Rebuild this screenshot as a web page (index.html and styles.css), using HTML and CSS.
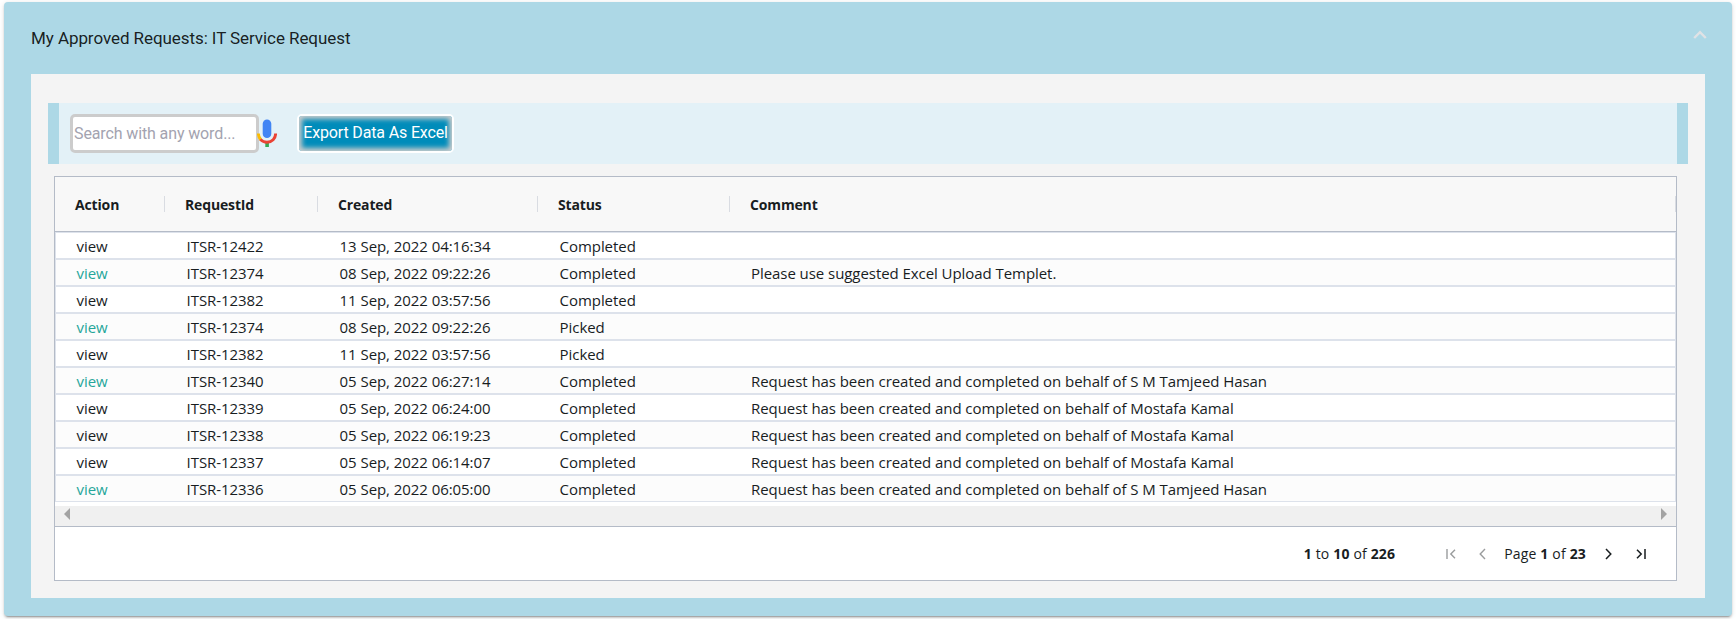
FILE: index.html
```html
<!DOCTYPE html>
<html lang="en">
<head>
<meta charset="utf-8">
<title>My Approved Requests</title>
<link rel="stylesheet" href="styles.css">
</head>
<body>
<section class="card">
  <header class="card-header">
    <h1 class="card-title">My Approved Requests: IT Service Request</h1>
    <svg class="collapse" width="14" height="10" viewBox="0 0 14 10"><path d="M1.2 8 7 2.2 12.8 8" fill="none" stroke="#e0e2e5" stroke-width="2.4"/></svg>
  </header>
  <div class="panel">
    <div class="toolbar">
      <input class="search" type="text" placeholder="Search with any word...">
      <svg class="mic" width="20" height="28" viewBox="0 0 20 28">
        <rect x="5.7" y=".4" width="8.6" height="18.6" rx="4.3" fill="#4285f4"/>
        <path d="M8.3 23h3.6v5H8.3z" fill="#34a853"/>
        <path d="M1.4 14.6C1.4 17 2.4 19.4 4 21" fill="none" stroke="#fbbc04" stroke-width="2.9"/>
        <path d="M3.4 20.4C5.2 22.4 7.4 23.3 10 23.3c5 0 8.6-3.7 8.6-8.7" fill="none" stroke="#ea4335" stroke-width="2.9"/>
      </svg>
      <button class="export" type="button">Export Data As Excel</button>
    </div>
    <div class="grid">
      <div class="grid-head">
        <span class="th">Action</span><span class="th">RequestId</span><span class="th">Created</span><span class="th">Status</span><span class="th">Comment</span>
      </div>
      <div class="grid-body">
        <div class="row"><a class="td">view</a><span class="td">ITSR-12422</span><span class="td">13 Sep, 2022 04:16:34</span><span class="td">Completed</span><span class="td"></span></div>
        <div class="row"><a class="td link">view</a><span class="td">ITSR-12374</span><span class="td">08 Sep, 2022 09:22:26</span><span class="td">Completed</span><span class="td">Please use suggested Excel Upload Templet.</span></div>
        <div class="row"><a class="td">view</a><span class="td">ITSR-12382</span><span class="td">11 Sep, 2022 03:57:56</span><span class="td">Completed</span><span class="td"></span></div>
        <div class="row"><a class="td link">view</a><span class="td">ITSR-12374</span><span class="td">08 Sep, 2022 09:22:26</span><span class="td">Picked</span><span class="td"></span></div>
        <div class="row"><a class="td">view</a><span class="td">ITSR-12382</span><span class="td">11 Sep, 2022 03:57:56</span><span class="td">Picked</span><span class="td"></span></div>
        <div class="row"><a class="td link">view</a><span class="td">ITSR-12340</span><span class="td">05 Sep, 2022 06:27:14</span><span class="td">Completed</span><span class="td">Request has been created and completed on behalf of S M Tamjeed Hasan</span></div>
        <div class="row"><a class="td">view</a><span class="td">ITSR-12339</span><span class="td">05 Sep, 2022 06:24:00</span><span class="td">Completed</span><span class="td">Request has been created and completed on behalf of Mostafa Kamal</span></div>
        <div class="row"><a class="td">view</a><span class="td">ITSR-12338</span><span class="td">05 Sep, 2022 06:19:23</span><span class="td">Completed</span><span class="td">Request has been created and completed on behalf of Mostafa Kamal</span></div>
        <div class="row"><a class="td">view</a><span class="td">ITSR-12337</span><span class="td">05 Sep, 2022 06:14:07</span><span class="td">Completed</span><span class="td">Request has been created and completed on behalf of Mostafa Kamal</span></div>
        <div class="row"><a class="td link">view</a><span class="td">ITSR-12336</span><span class="td">05 Sep, 2022 06:05:00</span><span class="td">Completed</span><span class="td">Request has been created and completed on behalf of S M Tamjeed Hasan</span></div>
      </div>
      <div class="scrollbar">
        <svg width="6" height="12" viewBox="0 0 6 12"><path d="M6 0v12L0 6z" fill="#a3a3a3"/></svg>
        <svg width="6" height="12" viewBox="0 0 6 12"><path d="M0 0v12l6-6z" fill="#a3a3a3"/></svg>
      </div>
      <footer class="paging">
        <span class="summary"><b>1</b> to <b>10</b> of <b>226</b></span>
        <svg class="first" width="10" height="10" viewBox="0 0 10 10"><path d="M1 0v10M9 .8 4.8 5 9 9.2" fill="none" stroke="#9a9c9d" stroke-width="1.4"/></svg>
        <svg class="prev" width="7" height="12" viewBox="0 0 7 12"><path d="M6 1 1.2 6 6 11" fill="none" stroke="#9a9c9d" stroke-width="1.4"/></svg>
        <span class="page">Page <b>1</b> of <b>23</b></span>
        <svg class="next" width="7" height="12" viewBox="0 0 7 12"><path d="M1 1l4.8 5L1 11" fill="none" stroke="#181d1f" stroke-width="1.5"/></svg>
        <svg class="last" width="10" height="10" viewBox="0 0 10 10"><path d="M9 0v10M1 .8 5.2 5 1 9.2" fill="none" stroke="#181d1f" stroke-width="1.5"/></svg>
      </footer>
    </div>
  </div>
</section>
</body>
</html>
```

FILE: styles.css
```css
* { box-sizing: border-box; }

body {
  margin: 0;
  padding: 2px 4px 3px;
  height: 619px;
  overflow: hidden;
  background: #fff;
  color: #181d1f;
  font-family: "Open Sans", "Noto Sans", sans-serif;
}

svg { display: block; flex: none; }

.card {
  height: 614px;
  padding: 0 27px 18px;
  border-radius: 4px;
  background: #add8e6;
  box-shadow: 0 3px 1px -2px rgba(0,0,0,.2), 0 2px 2px 0 rgba(0,0,0,.14), 0 1px 5px 0 rgba(0,0,0,.12);
}

.card-header {
  display: flex;
  justify-content: space-between;
  height: 72px;
}

.card-title {
  margin: 0;
  padding-top: 24px;
  font: 400 17px/24px Roboto, sans-serif;
  letter-spacing: -.07px;
  color: rgba(0,0,0,.87);
}

.collapse { margin: 28px -2px 0 0; }

.panel {
  height: 524px;
  padding: 29px 17px 17px;
  background: #f4f4f4;
}

.toolbar {
  display: flex;
  align-items: flex-start;
  height: 61px;
  padding: 11px;
  border: solid #add8e6;
  border-width: 0 11px;
  background: #e3f1f7;
}

.search {
  width: 189px;
  height: 39px;
  padding: 0 1px;
  border: 3px solid #ccc;
  border-radius: 5px;
  background: #fff;
  font: 16px Roboto, sans-serif;
  letter-spacing: -.12px;
}

.search::placeholder { color: #a3a3b0; }

.mic { margin: 5px 0 0 -2px; }

.export {
  width: 157px;
  height: 39px;
  margin-left: 20px;
  padding: 0 0 3px;
  border: 2px solid #fff;
  border-radius: 5px;
  background: #008cba;
  box-shadow: inset 0 0 5px 3px #ccc;
  color: #fff;
  font: 16px Roboto, sans-serif;
  letter-spacing: -.15px;
  white-space: nowrap;
}

.grid {
  width: 1623px;
  margin: 12px 0 0 6px;
  border: 1px solid #b4bbc7;
  background: #fff;
}

.grid-head,
.row {
  display: grid;
  grid-template-columns: 110px 153px 220px 192px 1fr;
}

.grid-head {
  height: 55px;
  border-bottom: 1px solid #b4bbc7;
  background: #f8f8f8;
  font-size: 14px;
  font-weight: 700;
  letter-spacing: -.15px;
}

.th {
  display: flex;
  align-items: center;
  padding-left: 20px;
  background: linear-gradient(#d9dce2, #d9dce2) right 19px / 1px 16px no-repeat;
}

.grid-body { padding-bottom: 4px; }

.row {
  height: 27px;
  border: 1px solid #dde2eb;
  font-size: 15px;
  line-height: 26px;
  letter-spacing: -.06px;
  white-space: nowrap;
}

.row:nth-child(even) { background: #fcfcfc; }

.td { padding-left: 20.6px; height: 25px; }
.td:last-child { padding-left: 20px; }

.link { color: #26a69a; }

.scrollbar {
  display: flex;
  justify-content: space-between;
  height: 20px;
  padding: 2px 9px;
  background: #f0f0f0;
}

.paging {
  display: flex;
  align-items: center;
  justify-content: flex-end;
  height: 54px;
  padding-right: 30px;
  border-top: 1px solid #b4bbc7;
  font-size: 14px;
  letter-spacing: .17px;
}

.paging b { font-weight: 700; }
.first { margin-left: 51px; }
.prev { margin-left: 23px; }
.page { margin-left: 18px; }
.next { margin-left: 19px; }
.last { margin-left: 24px; }
```
